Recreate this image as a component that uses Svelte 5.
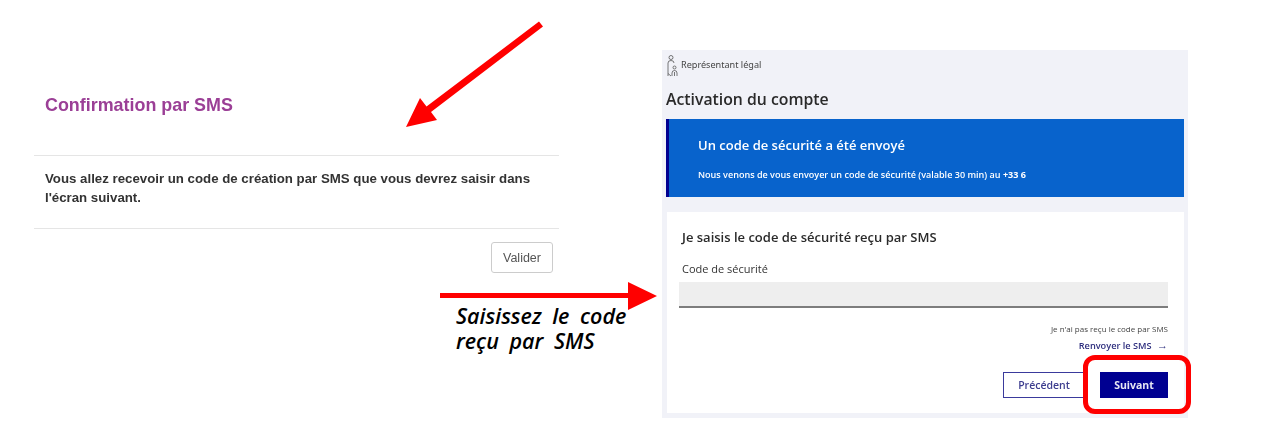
<script>
  const note = ['Saisissez le code', 'reçu par SMS'];
</script>

<div class="page">
  <section class="left">
    <h1>Confirmation par SMS</h1>
    <p>Vous allez recevoir un code de création par SMS que vous devrez saisir dans l'écran suivant.</p>
    <div class="foot"><button class="valider">Valider</button></div>
  </section>

  <section class="right">
    <div class="role">
      <svg width="11" height="22" viewBox="0 0 11 22" fill="none" stroke="#555" stroke-width="0.8">
        <circle cx="4" cy="2.500" r="2"/>
        <path d="M1 21V8q0-2.500 3-2.500t3 2.500"/>
        <circle cx="7.500" cy="12.500" r="1.500"/>
        <path d="M5 21v-3q0-2.500 2.500-2.500t2.500 2.500v3M7.500 17v4M1 18.500l3 2.500"/>
      </svg>
      <span>Représentant légal</span>
    </div>
    <h2>Activation du compte</h2>
    <div class="banner">
      <h3>Un code de sécurité a été envoyé</h3>
      <p>Nous venons de vous envoyer un code de sécurité (valable 30 min) au <b>+33 6</b></p>
    </div>
    <div class="card">
      <h4>Je saisis le code de sécurité reçu par SMS</h4>
      <label for="code">Code de sécurité</label>
      <input id="code" type="text" />
      <div class="resend">
        <small>Je n'ai pas reçu le code par SMS</small>
        <a href="#top">Renvoyer le SMS <span class="arr">→</span></a>
      </div>
      <div class="actions">
        <button class="prev">Précédent</button>
        <button class="next">Suivant</button>
      </div>
    </div>
  </section>

  <svg class="overlay" width="1287" height="421" viewBox="0 0 1287 421">
    <path d="M539 21.500 543 26.500 431 112 437 120 406 127 420 98 426.500 106.500Z" fill="#f00"/>
    <path d="M440 293H628V282L657 296 628 310V298H440Z" fill="#f00"/>
  </svg>
  <div class="note">{#each note as l}<div>{l}</div>{/each}</div>
  <div class="ring"></div>
</div>

<style>
  :global(body) { margin: 0; background: #fff; }
  .page {
    position: relative; width: 1287px; height: 421px; overflow: hidden;
    display: flex; align-items: flex-start; padding: 50px 0 0 34px; box-sizing: border-box;
    font-family: "Liberation Sans", Arial, sans-serif;
  }
  .left { width: 525px; margin-right: 103px; color: #333; filter: blur(0.3px); }
  .left h1 {
    margin: 0; padding: 45px 10px 40px 11px; height: 20px; box-sizing: content-box;
    font-size: 17.900px; line-height: 20px; font-weight: 700; color: #9b3f96;
    border-bottom: 1px solid #e5e5e5;
  }
  .left p {
    margin: 0; padding: 13px 24px 20px 11px; height: 39px; box-sizing: content-box;
    font-size: 13.250px; line-height: 19px; font-weight: 700; color: #333;
    border-bottom: 1px solid #e5e5e5;
  }
  .foot { display: flex; justify-content: flex-end; padding: 13px 6px 0 0; }
  .valider {
    width: 62px; height: 31px; padding: 0; background: #fff; color: #555;
    border: 1px solid #ccc; border-radius: 3px;
    font: 12.500px "Liberation Sans", Arial, sans-serif;
  }
  .right {
    width: 526px; height: 368px; background: #f1f2f8; box-sizing: border-box;
    padding: 0 4px 5px 4px; font-family: "Open Sans", "Noto Sans", sans-serif; color: #2b2b2b;
    display: flex; flex-direction: column; filter: blur(0.35px);
  }
  .role { display: flex; align-items: center; gap: 3px; height: 28px; padding-top: 2px; padding-left: 1px; margin-bottom: 2px; font-family: "Noto Sans", sans-serif; font-size: 9.100px; color: #444; }
  .role span { margin-top: -3px; }
  h2 { margin: 0; padding: 5px 0 0; height: 32px; font-size: 15.800px; line-height: 24px; font-weight: 600; color: #2a2a2a; box-sizing: content-box; }
  .banner {
    height: 78px; box-sizing: border-box; background: #0863cc; border-left: 3px solid #000091;
    padding: 17px 0 0 29px; color: #fff; margin-bottom: 15px;
  }
  .banner h3 { margin: 0 0 14px; font-size: 13px; line-height: 18px; font-weight: 600; }
  .banner p { margin: 0; font-size: 9.050px; line-height: 14px; font-weight: 600; }
  .banner b { font-weight: 700; }
  .card {
    flex: 1; background: #fff; padding: 16px 16px 0 12px; margin-left: 1px; display: flex; flex-direction: column;
  }
  h4 { margin: 0 3px 15px; font-size: 13px; line-height: 18px; font-weight: 600; color: #2a2a2a; }
  label { margin: 0 3px 6px; font-size: 11px; line-height: 15px; color: #333; }
  input {
    height: 26px; box-sizing: border-box; width: 100%; background: #eee; border: 0;
    border-bottom: 2px solid #7d7d7d; padding: 0; outline: none;
  }
  .resend { display: flex; flex-direction: column; align-items: flex-end; margin-top: 15px; }
  small { font-size: 8px; line-height: 12px; color: #444; }
  a { margin-top: 3px; font-size: 9.200px; line-height: 14px; font-weight: 600; color: #2e2e7e; text-decoration: none; }
  .arr { margin-left: 3px; font-size: 11px; }
  .actions { display: flex; justify-content: flex-end; gap: 15px; margin-top: 19px; }
  button { cursor: pointer; }
  .prev, .next { height: 26px; padding: 0; font-family: "Open Sans", sans-serif; font-size: 10.500px; font-weight: 600; }
  .prev { width: 82px; background: #fff; border: 1px solid #3a3a9c; color: #3d3d8f; }
  .next { width: 68px; background: #000091; border: 0; color: #e8e8f4; font-weight: 700; }
  .overlay { position: absolute; left: 0; top: 0; pointer-events: none; }
  .note {
    position: absolute; left: 456px; top: 303px; font-family: "Open Sans", sans-serif;
    font-style: italic; font-weight: 600; font-size: 21.500px; line-height: 25px; color: #000;
    word-spacing: 5px;
  }
  .ring {
    position: absolute; left: 1083px; top: 355px; width: 108px; height: 59px; box-sizing: border-box;
    border: 5px solid #f00; border-radius: 12px;
  }
</style>
